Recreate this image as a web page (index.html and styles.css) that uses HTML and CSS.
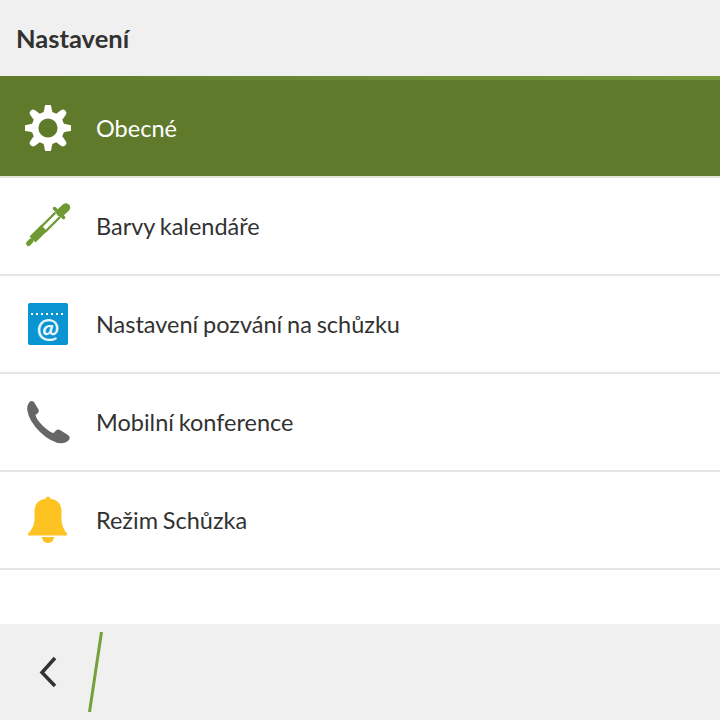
FILE: index.html
```html
<!DOCTYPE html>
<html lang="cs">
<head>
<meta charset="utf-8">
<title>Nastavení</title>
<link rel="stylesheet" href="styles.css">
</head>
<body>
<div class="app">
  <header class="title-bar"><h1 class="title">Nastavení</h1></header>
  <ul class="list">
    <li class="row row-active">
      <span class="icon">
        <svg viewBox="0 0 48 48" width="46" height="46"><path class="gear" fill-rule="evenodd" d="M20.500 2.500a3.500 3.500 0 0 1 7 0L28.500 7.400 32.600 9.100 37.500 5.600a3.500 3.500 0 0 1 4.900 4.900L38.900 15.400 40.600 19.500 45.500 20.500a3.500 3.500 0 0 1 0 7L40.600 28.500 38.900 32.600 42.400 37.500a3.500 3.500 0 0 1-4.900 4.900L32.600 38.900 28.500 40.600 27.500 45.500a3.500 3.500 0 0 1-7 0L19.500 40.600 15.400 38.900 10.500 42.400a3.500 3.500 0 0 1-4.900-4.900L9.100 32.600 7.400 28.500 2.500 27.500a3.500 3.500 0 0 1 0-7L7.400 19.500 9.100 15.400 5.600 10.500a3.500 3.500 0 0 1 4.900-4.900L15.400 9.100 19.500 7.400ZM24 14a10 10 0 1 0 0 20 10 10 0 0 0 0-20Z"/></svg>
      </span>
      <span class="label">Obecné</span>
    </li>
    <li class="row">
      <span class="icon">
        <svg viewBox="0 0 48 48" width="48" height="48">
          <path class="dropper-bulb" d="M36.500 10.500 42 5.500"/>
          <path class="dropper-collar" d="M30.500 6.500 39.500 15.500"/>
          <path class="dropper-wall" d="M31.500 10.500 16.500 25.500M36 15 21 30"/>
          <path class="dropper-tube" d="M20 26 8.500 37.500"/>
          <path class="dropper-tip" d="M7 39 4.500 41.500"/>
        </svg>
      </span>
      <span class="label">Barvy kalendáře</span>
    </li>
    <li class="row">
      <span class="icon">
        <span class="invite">
          <span class="dots"></span>
          <span class="at">@</span>
        </span>
      </span>
      <span class="label">Nastavení pozvání na schůzku</span>
    </li>
    <li class="row">
      <span class="icon">
        <svg viewBox="0 0 48 48" width="48" height="48"><path class="phone" d="M6 3.500Q8 2.500 10 4L14.500 11.500Q15.500 13.500 14 15L11.500 17Q12 21 19 28 26 34.500 29.500 35L32 32.500Q33.500 31 36 32L44 37Q46.500 39 45.500 41 43 45 38 45.200 28 45.500 16 34 5 23 3.200 12 2.800 6.500 6 3.500Z"/></svg>
      </span>
      <span class="label">Mobilní konference</span>
    </li>
    <li class="row">
      <span class="icon">
        <svg viewBox="0 0 48 48" width="48" height="48"><path class="bell" d="M22 2.500Q22 .5 24 .5T26 2.500Q36.500 4 37.500 13.500V24Q38 32 43 37.500V39.500H4V37.500Q10 32 10.500 24V13.500Q11.500 4 22 2.500ZM17.800 41H30.200Q29 47 24 47T17.800 41Z"/></svg>
      </span>
      <span class="label">Režim Schůzka</span>
    </li>
  </ul>
  <footer class="action-bar">
    <button class="back" aria-label="Zpět">
      <svg viewBox="0 0 18 32" width="18" height="32"><path class="chevron" d="M16 2 3 16.500 16 30"/></svg>
    </button>
    <svg class="slash" viewBox="0 0 16 80" width="16" height="80"><path class="slash-line" d="M13.500 0 1.500 80"/></svg>
  </footer>
</div>
</body>
</html>
```

FILE: styles.css
```css
* { box-sizing: border-box; }
html, body { margin: 0; padding: 0; }
body { width: 720px; height: 720px; overflow: hidden; background: #fff; font-family: Lato, "Noto Sans", sans-serif; color: #323232; }
.app { display: flex; flex-direction: column; height: 720px; }
.title-bar { flex: 0 0 76px; display: flex; align-items: center; padding: 0 16px; background: #f0f0f0; }
.title { margin: 0; font-size: 25.5px; font-weight: 700; color: #323232; }
.list { flex: 1; margin: 0; padding: 0; list-style: none; background: #fff; }
.row { display: flex; align-items: center; height: 98px; padding: 0 0 0 24px; gap: 24px; border-bottom: 2px solid #e6e6e6; font-size: 23.5px; word-spacing: -1.2px; }
.row-active { height: 102px; background: #5e7a2a; border-top: 4px solid transparent; border-bottom: 2px solid #e4e6dc; color: #fff; position: relative; }
.row-active::before { content: ""; position: absolute; left: 0; right: 0; top: -4px; height: 4px; background: linear-gradient(90deg, #5e7a2a 0, #6d8c37 55%, #76983a 100%); }
.row-active .label { color: #fff; }
.icon { width: 48px; height: 48px; display: flex; align-items: center; justify-content: center; flex: none; }
.icon svg { display: block; }
.label { color: #323232; }
.gear { fill: #fff; }
.dropper-bulb, .dropper-collar, .dropper-wall, .dropper-tube, .dropper-tip { fill: none; stroke: #6f9a33; }
.dropper-bulb { stroke-width: 8.500; stroke-linecap: round; }
.dropper-collar { stroke-width: 3.500; stroke-linecap: round; }
.dropper-wall { stroke-width: 2.400; }
.dropper-tube { stroke-width: 8.500; }
.dropper-tip { stroke-width: 5; stroke-linecap: round; }
.phone { fill: #666; }
.bell { fill: #fdc323; }
.invite { position: relative; display: flex; justify-content: center; width: 40px; height: 42px; border-radius: 2px; background: #0a94d2; }
.dots { position: absolute; top: 10px; left: 3px; right: 2px; height: 2px; background: repeating-linear-gradient(90deg, #fff 0 2px, transparent 2px 5px); }
.at { margin-top: 10px; font-size: 27px; line-height: 30px; font-weight: 700; color: #e8f6fc; }
.action-bar { flex: 0 0 96px; display: flex; align-items: center; background: #f0f0f0; position: relative; }
.back { display: flex; padding: 0; margin: 0 0 0 39px; border: 0; background: none; }
.chevron { fill: none; stroke: #323232; stroke-width: 3.500; }
.slash { position: absolute; left: 88px; top: 8px; }
.slash-line { fill: none; stroke: #76a03a; stroke-width: 3; }
```
